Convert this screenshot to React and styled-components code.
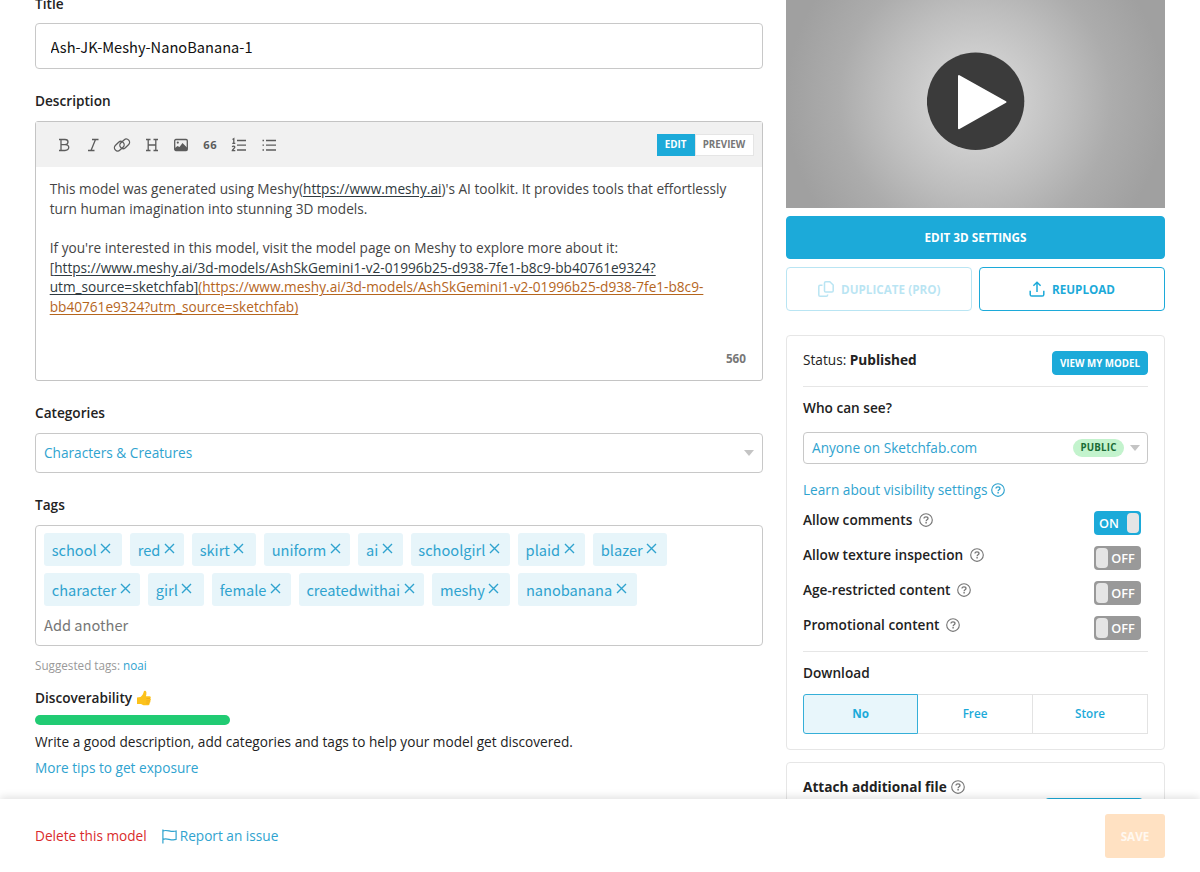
import React, { useState } from "react";
import styled, { createGlobalStyle } from "styled-components";

const sans = `"Open Sans", "Noto Sans", sans-serif`;
const source = `"Noto Sans CJK SC", "Open Sans", sans-serif`;

const GlobalStyle = createGlobalStyle`
    * {
        box-sizing: border-box;
    }

    body {
        margin: 0;
        background: #fff;
        color: #222;
        font-family: ${sans};
        font-size: 13.65px;
        line-height: 20px;
    }

    button, input {
        font-family: inherit;
        margin: 0;
    }

    svg {
        display: block;
        flex: none;
    }
`

const Page = styled.div`
    display: flex;
    flex-direction: column;
    height: 872px;
    overflow: hidden;
`

const Content = styled.main`
    display: flex;
    justify-content: space-between;
    align-items: flex-start;
    height: 799px;
    padding: 0 35px;
    overflow: hidden;
`

const Form = styled.div`
    width: 728px;
`

const Sidebar = styled.aside`
    width: 379px;
`

const Label = styled.div`
    display: flex;
    align-items: center;
    gap: 4px;
    height: 20px;
    margin: ${props => props.$margin};
    font-weight: 600;
    color: #222;
    white-space: nowrap;
`

const TitleInput = styled.input`
    display: block;
    width: 100%;
    height: 46px;
    padding: 0 15px 0 14.6px;
    border: 1px solid #c8c8c8;
    border-radius: 4px;
    outline: none;
    font-family: ${source};
    font-size: 14.63px;
    color: #111;
`

const Editor = styled.div`
    height: 260px;
    border: 1px solid #c4c4c4;
    border-radius: 3px;
    display: flex;
    flex-direction: column;
`

const Toolbar = styled.div`
    display: flex;
    align-items: center;
    justify-content: space-between;
    height: 45px;
    padding: 0 8.5px 0 13px;
    background: #f1f1f1;
`

const Tools = styled.div`
    display: flex;
    padding-top: 1px;
`

const Tool = styled.div`
    display: flex;
    align-items: center;
    justify-content: center;
    width: 29.3px;
    height: 24px;
    color: #5c5c5c;
    font-size: 11.2px;
    font-weight: 700;
    letter-spacing: 0.5px;
`

const Modes = styled.div`
    display: flex;
    height: 22px;
`

const Mode = styled.button`
    width: ${props => props.$width};
    padding: 0;
    border: 1px solid ${props => props.$active ? "#1caad9" : "#e5e5e5"};
    background: ${props => props.$active ? "#1caad9" : "#fff"};
    color: ${props => props.$active ? "#fff" : "#777"};
    font-size: 9.8px;
    font-weight: 700;
    line-height: 18px;
`

const Text = styled.div`
    flex: 1;
    padding: 12px 14px 0 13.7px;
    color: #444;
    line-height: 19.65px;
    white-space: pre;

    u {
        text-underline-offset: 1.5px;
        color: #2f3a40;
    }
`

const Orange = styled.span`
    color: #b5651d;
    text-decoration: underline;
    text-underline-offset: 1.5px;
`

const Count = styled.div`
    padding: 0 16px 12px;
    text-align: right;
    font-size: 11.7px;
    font-weight: 700;
    color: #777;
`

const Select = styled.div`
    display: flex;
    align-items: center;
    height: ${props => props.$height};
    padding: 0 8px;
    border: 1px solid #c8c8c8;
    border-radius: 4px;
    color: #2fa3cf;

    span {
        flex: 1;
    }
`

const Arrow = styled.i`
    border: 5px solid transparent;
    border-top: 6px solid #c4c4c4;
    border-bottom: 0;
`

const Pill = styled.b`
    width: 51px;
    height: 18px;
    margin-right: 6px;
    border-radius: 9px;
    background: #c3f3cd;
    color: #1a6b35;
    font-size: 9.75px;
    line-height: 18px;
    letter-spacing: 0.2px;
    text-align: center;
`

const VisibilitySelect = styled(Select)`
    padding-right: 7px;
`

const TagBox = styled.div`
    height: 121px;
    padding: 7.4px 8px;
    border: 1px solid #c8c8c8;
    border-radius: 4px;
    font-family: ${source};
`

const TagRow = styled.div`
    display: flex;
    gap: 8px;
    height: 32.4px;
    margin-bottom: 7.6px;
`

const TagItem = styled.div`
    display: flex;
    align-items: center;
    gap: 3.5px;
    width: ${props => props.$width}px;
    padding-left: 7.7px;
    border-radius: 3px;
    background: #e7f5fa;
    color: #2fa3cf;
    font-size: 14.63px;
    white-space: nowrap;

    svg {
        margin-top: -3px;
    }
`

const AddAnother = styled.div`
    color: #777;
    font-size: 14.63px;
    line-height: 23px;
`

const Suggested = styled.div`
    margin-top: 9px;
    color: #999;
    font-size: 11.7px;
`

const Link = styled.a`
    display: ${props => props.$block ? "flex" : "inline"};
    align-items: center;
    gap: ${props => props.$gap || "3px"};
    color: ${props => props.$danger ? "#d92b2b" : "#2fa3cf"};
`

const Meter = styled.div`
    width: 195px;
    height: 10px;
    margin: 7.5px 0 6.5px;
    border-radius: 5px;
    background: #21cb73;
`

const Hint = styled.div`
    margin-bottom: 6.5px;
`

const Preview = styled.div`
    display: flex;
    justify-content: center;
    height: 208px;
    margin-bottom: 7.5px;
    padding-top: 52px;
    background: radial-gradient(circle 190px at 50% 48.5%, #d8d8d8 0%, #cdcdcd 26%, #bebebe 48%, #acacac 72%, #a0a0a0 100%);
`

const Button = styled.button`
    display: flex;
    align-items: center;
    justify-content: center;
    gap: ${props => props.$gap || "6px"};
    width: 100%;
    height: ${props => props.$small ? "24px" : "43.5px"};
    padding: 0;
    border: 1px solid #1caad9;
    border-radius: 4px;
    background: ${props => props.$outline ? "#fff" : "#1caad9"};
    color: ${props => props.$outline ? "#1caad9" : "#fff"};
    opacity: ${props => props.$faded ? 0.3 : 1};
    font-size: ${props => props.$small ? "9.75px" : "11.7px"};
    font-weight: 700;
    white-space: nowrap;
`

const Buttons = styled.div`
    display: grid;
    grid-template-columns: 1fr 1fr;
    gap: 7px;
    margin: 8px 0 24px;
`

const Card = styled.section`
    height: ${props => props.$height};
    margin-bottom: 12.4px;
    padding: 0 16px;
    border: 1px solid #e6e6e6;
    border-radius: 4px;
`

const Status = styled.div`
    display: flex;
    justify-content: space-between;
    height: 51.6px;
    padding-top: 14.6px;
    border-bottom: 1px solid #e6e6e6;

    ${Button} {
        width: 96px;
        margin-top: 1px;
    }
`

const Learn = styled.div`
    height: 20px;
    margin: 16px 0 11px;
`

const Option = styled.div`
    display: flex;
    justify-content: space-between;
    height: 35.1px;
    padding-right: 7.5px;
    font-weight: 600;

    > span {
        display: flex;
        align-items: center;
        gap: 7px;
        height: 20px;
        margin-top: -1px;
    }
`

const Toggle = styled.div`
    display: flex;
    flex-direction: ${props => props.$on ? "row" : "row-reverse"};
    align-items: center;
    width: 47px;
    height: 24px;
    padding: 2px;
    border-radius: 4px;
    background: ${props => props.$on ? "#1caad9" : "#999"};
    color: #fff;
    font-size: 12.7px;
    font-weight: 600;
    line-height: 20px;

    span {
        flex: 1;
        padding-right: ${props => props.$on ? "4px" : "0"};
        text-align: center;
    }
`

const Knob = styled.i`
    width: 12px;
    height: 20px;
    border-radius: 4px;
    background: #e5e5e5;
`

const Line = styled.div`
    height: 1px;
    background: #e6e6e6;
`

const Segments = styled.div`
    display: grid;
    grid-template-columns: 1fr 1fr 1fr;
    height: 40px;
`

const Segment = styled.button`
    padding: 0 0 2px;
    border: 1px solid ${props => props.$active ? "#35afd8" : "#e3e3e3"};
    border-left-width: ${props => props.$active ? "1px" : "0"};
    border-radius: ${props => props.$active ? "3px 0 0 3px" : "0"};
    background: ${props => props.$active ? "#e8f6fb" : "#fff"};
    color: #1caad9;
    font-size: 11.7px;
    font-weight: ${props => props.$active ? 700 : 600};
`

const AttachHeader = styled.div`
    display: flex;
    align-items: center;
    gap: 4px;
    height: 20px;
    margin-top: 14px;
    font-weight: 700;
`

const AttachButton = styled.div`
    width: 98px;
    height: 24px;
    margin: 1px 5px 0 auto;
    border-radius: 4px;
    background: #1caad9;
`

const Footer = styled.footer`
    display: flex;
    align-items: center;
    gap: 15px;
    height: 73px;
    padding: 1px 35px 0;
    background: #fff;
    box-shadow: 0 -2px 8px rgba(0, 0, 0, 0.12);
    position: relative;
`

const Save = styled.button`
    width: 60px;
    height: 44px;
    margin: 0 0 0 auto;
    padding: 0;
    border: 0;
    border-radius: 3px;
    background: #ffe1c2;
    color: #fff8f0;
    font-size: 11.7px;
    font-weight: 700;
`

const HelpIcon = ({ color = "#777" }) => (
    <svg width="14" height="14" viewBox="0 0 14 14" fill="none" stroke={color} strokeWidth="1.15">
        <circle cx="7" cy="7" r="6.3" />
        <path d="M5 5.6C5 4.4 5.9 3.8 7 3.8s2 .7 2 1.7C9 6.8 7.1 6.8 7.1 8.2" strokeWidth="1.3" />
        <path d="M7.1 9.1v1.4" strokeWidth="1.4" />
    </svg>
)

const CloseIcon = () => (
    <svg width="11" height="11" viewBox="0 0 11 11" stroke="#2fa3cf" strokeWidth="1.4">
        <path d="M1 1l9 9M10 1l-9 9" />
    </svg>
)

const icon = {
    width: 16,
    height: 16,
    viewBox: "0 0 16 16",
    fill: "none",
    stroke: "currentColor",
    strokeWidth: 1.3,
}

const BoldIcon = () => (
    <svg {...icon}>
        <path d="M3 2.5H9c4 0 4 5.2 0 5.2H5M9 7.7c5 0 5 5.8 0 5.8H3M5 2.5v11" />
    </svg>
)

const ItalicIcon = () => (
    <svg {...icon}>
        <path d="M7 2.500h6.500M3 13.500h6.500M10.500 2.500l-4.500 11" />
    </svg>
)

const LinkIcon = () => (
    <svg {...icon} width="18" height="18" viewBox="0 0 18 18">
        <rect x="-5.4" y="-3.3" width="10.8" height="6.600" rx="3.300" transform="translate(6.3 10.2) rotate(-42)" />
        <rect x="-5.4" y="-3.3" width="10.8" height="6.600" rx="3.300" transform="translate(11.7 7.8) rotate(-42)" />
    </svg>
)

const HeadingIcon = () => (
    <svg {...icon}>
        <path d="M2 2.5h4.500M9.500 2.500H14M2 13.500h4.500M9.500 13.500H14M4.200 2.500v11M11.800 2.500v11M4 8h8" />
    </svg>
)

const ImageIcon = () => (
    <svg {...icon}>
        <rect x="1.7" y="2.5" width="12.6" height="11" rx="1.2" />
        <path d="M2 13v-2l2.500-2 2 1 3-4 1.500 1.500L14 10.500V13z" fill="currentColor" stroke="none" />
        <circle cx="4.8" cy="5.6" r="1.1" fill="currentColor" stroke="none" />
    </svg>
)

const OrderedIcon = () => (
    <svg {...icon}>
        <path d="M6 3.500h9M6 8.200h9M6 13h9" />
        <path d="M1.500 2.500l1.300-.8v4.500M1.300 6.400h3M1.300 10c.4-1.200 2.600-1 2.500.3 0 1-2.300 2-2.500 3.400h3" strokeWidth="1.3" />
    </svg>
)

const BulletIcon = () => (
    <svg {...icon}>
        <path d="M5 3.500h10M5 8.200h10M5 13h10M1.500 3.500H3M1.500 8.200H3M1.500 13H3" />
    </svg>
)

const CopyIcon = () => (
    <svg {...icon} strokeWidth="1.5">
        <path d="M7.800.8h4L15.200 4v5.800c0 .8-.5 1.300-1.300 1.300H7.800c-.8 0-1.300-.5-1.300-1.300V2.100C6.500 1.300 7 .8 7.800.8zM4.500 4.300H2.100C1.300 4.300.8 4.800.8 5.600v8.300c0 .8.5 1.300 1.300 1.300h6.200c.8 0 1.300-.5 1.300-1.300v-.4" />
    </svg>
)

const UploadIcon = () => (
    <svg {...icon} strokeWidth="1.5">
        <path d="M8 11V1.200M4.400 4.700L8 1.200l3.600 3.500M1.200 9.800v3.700c0 1 .6 1.600 1.600 1.600h10.400c1 0 1.600-.6 1.600-1.600V9.800" />
    </svg>
)

const FlagIcon = () => (
    <svg width="15" height="15" viewBox="0 0 15 15" fill="none" stroke="#2fa3cf" strokeWidth="1.2">
        <path d="M.9.5v14M.9 2c4-2 8 1.800 13.200 0v8.400c-5.200 1.800-9.200-2-13.200 0" />
    </svg>
)

const ThumbIcon = () => (
    <svg width="16" height="16" viewBox="0 0 16 16">
        <path d="M1 7.5L4.5 7C6.5 5.500 7.400 3.300 7.800 1.400 8.200.3 10.300.5 10.400 2.500c.1 1.400-.1 2.500-.5 3.700h3.600c1.500 0 1.700 1.900.7 2.300 1 .6.900 2-.1 2.300.6.700.4 1.900-.6 2.200.4 1-.2 2.200-1.200 2.200H7.500L5 14 1 14z" fill="#fcc21b" />
        <path d="M10.500 8.500h3.700M10.300 10.900h3.700M10.200 13.100h3" stroke="#e9a11b" strokeWidth=".6" />
    </svg>
)

const PlayIcon = () => (
    <svg width="98" height="98" viewBox="0 0 98 98">
        <circle cx="48.6" cy="49.3" r="48.7" fill="#3b3b3b" />
        <path d="M32 24v52.200L78.500 50z" fill="#fff" stroke="#fff" strokeWidth="2" strokeLinejoin="round" />
    </svg>
)

const tools = [
    <BoldIcon />, <ItalicIcon />, <LinkIcon />, <HeadingIcon />,
    <ImageIcon />, "66", <OrderedIcon />, <BulletIcon />,
]

const tags = [
    [["school", 78], ["red", 54], ["skirt", 64], ["uniform", 86.3], ["ai", 44.3], ["schoolgirl", 99.3], ["plaid", 67.2], ["blazer", 74]],
    [["character", 96], ["girl", 56], ["female", 78.7], ["createdwithai", 125.5], ["meshy", 78], ["nanobanana", 119]],
]

const options = [
    ["Allow comments", true],
    ["Allow texture inspection", false],
    ["Age-restricted content", false],
    ["Promotional content", false],
]

const App = () => {
    const [title, setTitle] = useState("Ash-JK-Meshy-NanoBanana-1");
    const [download, setDownload] = useState("No");

    return (
        <Page>
            <GlobalStyle />
            <Content>
                <Form>
                    <Label $margin="-6px 0 9px">Title</Label>
                    <TitleInput value={title} onChange={e => setTitle(e.target.value)} />
                    <Label $margin="22px 0 10px">Description</Label>
                    <Editor>
                        <Toolbar>
                            <Tools>
                                {tools.map((tool, i) => <Tool key={i}>{tool}</Tool>)}
                            </Tools>
                            <Modes>
                                <Mode $active $width="38px">EDIT</Mode>
                                <Mode $width="59px">PREVIEW</Mode>
                            </Modes>
                        </Toolbar>
                        <Text>
                            This model was generated using Meshy(<u>https://www.meshy.ai</u>)'s AI toolkit. It provides tools that effortlessly<br />
                            turn human imagination into stunning 3D models.<br />
                            <br />
                            If you're interested in this model, visit the model page on Meshy to explore more about it:<br />
                            [<u>https://www.meshy.ai/3d-models/AshSkGemini1-v2-01996b25-d938-7fe1-b8c9-bb40761e9324?</u><br />
                            <u>utm_source=sketchfab]</u><Orange>(https://www.meshy.ai/3d-models/AshSkGemini1-v2-01996b25-d938-7fe1-b8c9-</Orange><br />
                            <Orange>bb40761e9324?utm_source=sketchfab)</Orange>
                        </Text>
                        <Count>560</Count>
                    </Editor>
                    <Label $margin="22px 0 10px">Categories</Label>
                    <Select $height="40px">
                        <span>Characters &amp; Creatures</span>
                        <Arrow />
                    </Select>
                    <Label $margin="22px 0 10px">Tags</Label>
                    <TagBox>
                        {tags.map((row, i) => (
                            <TagRow key={i}>
                                {row.map(([name, width]) => (
                                    <TagItem key={name} $width={width}>{name}<CloseIcon /></TagItem>
                                ))}
                            </TagRow>
                        ))}
                        <AddAnother>Add another</AddAnother>
                    </TagBox>
                    <Suggested>Suggested tags: <Link>noai</Link></Suggested>
                    <Label $margin="12.5px 0 0">Discoverability <ThumbIcon /></Label>
                    <Meter />
                    <Hint>Write a good description, add categories and tags to help your model get discovered.</Hint>
                    <Link>More tips to get exposure</Link>
                </Form>
                <Sidebar>
                    <Preview><PlayIcon /></Preview>
                    <Button>EDIT 3D SETTINGS</Button>
                    <Buttons>
                        <Button $outline $faded $gap="7.5px"><CopyIcon />DUPLICATE (PRO)</Button>
                        <Button $outline $gap="7px"><UploadIcon />REUPLOAD</Button>
                    </Buttons>
                    <Card $height="415.6px">
                        <Status>
                            <span>Status: <b>Published</b></span>
                            <Button $small>VIEW MY MODEL</Button>
                        </Status>
                        <Label $margin="10.6px 0 14.4px">Who can see?</Label>
                        <VisibilitySelect $height="32px">
                            <span>Anyone on Sketchfab.com</span>
                            <Pill>PUBLIC</Pill>
                            <Arrow />
                        </VisibilitySelect>
                        <Learn><Link $block $gap="4px">Learn about visibility settings <HelpIcon color="#2fa3cf" /></Link></Learn>
                        {options.map(([name, on]) => (
                            <Option key={name}>
                                <span>{name}<HelpIcon /></span>
                                <Toggle $on={on}><span>{on ? "ON" : "OFF"}</span><Knob /></Toggle>
                            </Option>
                        ))}
                        <Line />
                        <Label $margin="10.4px 0 11px">Download</Label>
                        <Segments>
                            {["No", "Free", "Store"].map(name => (
                                <Segment key={name} $active={download === name} onClick={() => setDownload(name)}>{name}</Segment>
                            ))}
                        </Segments>
                    </Card>
                    <Card $height="120px">
                        <AttachHeader>Attach additional file<HelpIcon /></AttachHeader>
                        <AttachButton />
                    </Card>
                </Sidebar>
            </Content>
            <Footer>
                <Link $danger>Delete this model</Link>
                <Link $block><FlagIcon />Report an issue</Link>
                <Save>SAVE</Save>
            </Footer>
        </Page>
    )
}

export default App;
